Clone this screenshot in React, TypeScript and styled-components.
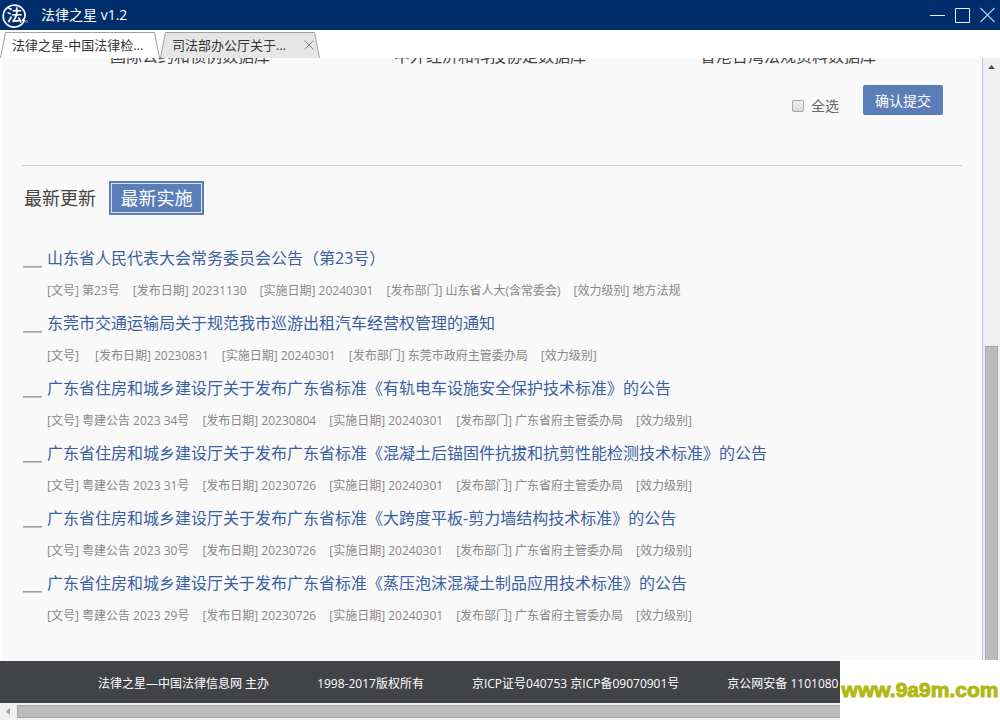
import React from 'react';
import styled, { createGlobalStyle } from 'styled-components';

const GlobalStyle = createGlobalStyle`
  * { box-sizing: border-box; }
  body {
    margin: 0;
    background: #fff;
    font-family: "Open Sans", "Noto Sans CJK SC", sans-serif;
    color: #444;
  }
  button { font: inherit; padding: 0; border: 0; background: none; cursor: pointer; }
`;

const Window = styled.div`
  position: relative;
  display: flex;
  flex-direction: column;
  min-height: 100vh;
  overflow: hidden;
`;

const TitleBar = styled.header`
  display: flex;
  align-items: center;
  height: 30px;
  padding: 0 4px 0 2px;
  background: #002e6c;
  color: #fff;
`;

const AppTitle = styled.h1`
  flex: 1;
  margin: 0 0 0 13px;
  font-size: 14px;
  font-weight: 400;
  line-height: 32px;
`;

const WindowButtons = styled.div`
  display: flex;
  gap: 9px;
`;

const WindowButton = styled.button`
  width: 16px;
  height: 16px;
  svg { display: block; }
`;

const TabBar = styled.nav`
  display: flex;
  height: 28px;
  padding-top: 2px;
`;

const Tab = styled.div`
  position: relative;
  display: flex;
  align-items: center;
  width: 160px;
  height: 26px;
  padding: 0 6px 0 12px;
`;

const TabShape = styled.svg`
  position: absolute;
  inset: 0;
`;

const TabLabel = styled.button`
  position: relative;
  flex: 1;
  text-align: left;
  white-space: nowrap;
  font-size: 13px;
  line-height: 24px;
  color: #333;
`;

const TabClose = styled.button`
  position: relative;
  width: 10px;
  height: 10px;
  svg { display: block; }
`;

const Body = styled.div`
  display: flex;
  flex: 1;
`;

const Page = styled.main`
  flex: 1;
  min-width: 0;
  margin-left: 2px;
  padding: 0 20px 26px;
  background: #f9f9f9;
  border-right: 1px solid #b4c3e0;
`;

const DatabaseRow = styled.div`
  display: flex;
  align-items: flex-end;
  height: 10px;
  padding-left: 88px;
  overflow: hidden;
  font-size: 16px;
  line-height: 24px;
  white-space: nowrap;
`;

const Database = styled.span<{ $gap: number }>`
  margin-right: ${(p) => p.$gap}px;
`;

const SubmitRow = styled.form`
  display: flex;
  justify-content: flex-end;
  align-items: center;
  margin-top: 16px;
  padding: 0 19px 49px 0;
  border-bottom: 1px solid #d0d0d0;
`;

const SelectAll = styled.label`
  display: flex;
  align-items: center;
  gap: 7px;
  margin: 12px 24px 0 0;
  font-size: 14px;
  line-height: 20px;
  color: #666;
`;

const Checkbox = styled.input`
  appearance: none;
  width: 12px;
  height: 12px;
  margin: 0;
  border: 1px solid #a6a6a6;
  border-radius: 2px;
  background: linear-gradient(#f0f0f0, #dcdcdc);
`;

const Submit = styled.button`
  width: 80px;
  height: 30px;
  border-radius: 2px;
  background: #5b7db8;
  color: #fff;
  font-size: 14px;
`;

const Sections = styled.div`
  display: flex;
  align-items: center;
  gap: 13px;
  margin: 15px 0 0 2px;
`;

const SectionButton = styled.button<{ $active?: boolean }>`
  height: 34px;
  font-size: 18px;
  line-height: 28px;
  color: ${(p) => (p.$active ? '#fff' : '#444')};
  ${(p) =>
    p.$active &&
    `
    padding: 0 8px;
    background: #5b7db8;
    border: 2px solid #5b7db8;
    box-shadow: inset 0 0 0 1px #d5e2f5;
    width: 95px;
  `}
`;

const List = styled.ul`
  margin: 28px 0 0;
  padding: 0;
  list-style: none;
`;

const Item = styled.li`
  display: flex;
  gap: 5px;
  height: 65px;
  padding-left: 1px;
  white-space: nowrap;
`;

const Dash = styled.span`
  width: 19px;
  height: 2px;
  margin-top: 23px;
  background: #a0a0a0;
  border-bottom: 1px solid #c4c4c4;
`;

const ItemTitle = styled.a`
  display: block;
  font-size: 16px;
  line-height: 30px;
  color: #3a5fa3;
  text-decoration: none;
`;

const Meta = styled.div`
  display: flex;
  gap: 13px;
  padding-top: 8px;
  font-size: 12px;
  line-height: 20px;
  color: #888;
  white-space: pre;
`;

const VerticalBar = styled.div`
  display: flex;
  flex-direction: column;
  align-items: center;
  width: 17px;
  padding: 7px 2px 0;
  background: #f0f0f0;
`;

const VerticalThumb = styled.div`
  align-self: stretch;
  flex: 1;
  margin: 277px 0 0;
  background: #bcbcbc;
  border: 1px solid #a8a8a8;
`;

const Footer = styled.footer`
  display: flex;
  gap: 48px;
  height: 42px;
  padding-left: 98px;
  background: #424346;
  color: #fff;
  font-size: 12px;
  line-height: 46px;
  white-space: nowrap;
`;

const HorizontalBar = styled.div`
  display: flex;
  align-items: center;
  height: 17px;
  padding: 2px 0 2px 6px;
  background: #f0f0f0;
`;

const HorizontalThumb = styled.div`
  align-self: stretch;
  flex: 1;
  margin-left: 7px;
  background: #bcbcbc;
  border: 1px solid #a8a8a8;
`;

const Watermark = styled.div`
  position: absolute;
  right: 0;
  bottom: 0;
  width: 160px;
  height: 60px;
  background: #fff;
  color: #b2b812;
  font-family: "Liberation Sans", sans-serif;
  font-size: 21px;
  font-weight: 700;
  line-height: 60px;
  text-align: center;
  -webkit-text-stroke: 1px #b2b812;
`;

const databases = [
  { name: '国际公约和惯例数据库', gap: 124 },
  { name: '中外经济和科技协定数据库', gap: 114 },
  { name: '香港台湾法规资料数据库', gap: 0 },
];

const labels = ['文号', '发布日期', '实施日期', '发布部门', '效力级别'];

const items = [
  {
    title: '山东省人民代表大会常务委员会公告（第23号）',
    meta: ['第23号', '20231130', '20240301', '山东省人大(含常委会)', '地方法规'],
  },
  {
    title: '东莞市交通运输局关于规范我市巡游出租汽车经营权管理的通知',
    meta: ['', '20230831', '20240301', '东莞市政府主管委办局', ''],
  },
  {
    title: '广东省住房和城乡建设厅关于发布广东省标准《有轨电车设施安全保护技术标准》的公告',
    meta: ['粤建公告 2023 34号', '20230804', '20240301', '广东省府主管委办局', ''],
  },
  {
    title: '广东省住房和城乡建设厅关于发布广东省标准《混凝土后锚固件抗拔和抗剪性能检测技术标准》的公告',
    meta: ['粤建公告 2023 31号', '20230726', '20240301', '广东省府主管委办局', ''],
  },
  {
    title: '广东省住房和城乡建设厅关于发布广东省标准《大跨度平板-剪力墙结构技术标准》的公告',
    meta: ['粤建公告 2023 30号', '20230726', '20240301', '广东省府主管委办局', ''],
  },
  {
    title: '广东省住房和城乡建设厅关于发布广东省标准《蒸压泡沫混凝土制品应用技术标准》的公告',
    meta: ['粤建公告 2023 29号', '20230726', '20240301', '广东省府主管委办局', ''],
  },
];

const LogoText = styled.text`
  font-family: "Noto Sans CJK SC", sans-serif;
  font-size: 16px;
  font-weight: 500;
`;

const Logo = () => (
  <svg width="26" height="26" viewBox="0 0 26 26" aria-hidden="true">
    <path d="M22.500 18A11 11 0 1 1 23 12C23.200 15 22.500 17.500 20 18.500" fill="none" stroke="#fff" strokeWidth="1.700" />
    <LogoText x="12.500" y="19" textAnchor="middle" fill="#fff">法</LogoText>
    <circle cx="24.500" cy="19.500" r="1" fill="none" stroke="#8fa6c8" />
  </svg>
);

const TabBackground = ({ fill }: { fill: string }) => (
  <TabShape width="160" height="26" viewBox="0 0 160 26" aria-hidden="true">
    <path d="M0.500 26L5.500 0.500H154.500L159.500 26" fill={fill} stroke="#a0a0a0" />
  </TabShape>
);

export default function App() {
  return (
    <Window>
      <GlobalStyle />
      <TitleBar>
        <Logo />
        <AppTitle>法律之星 v1.2</AppTitle>
        <WindowButtons>
          <WindowButton aria-label="最小化">
            <svg width="16" height="16" stroke="#e8f0fa"><path d="M0 8.500H15" /></svg>
          </WindowButton>
          <WindowButton aria-label="最大化">
            <svg width="16" height="16" fill="none" stroke="#e8f0fa"><path d="M0.500 1.500H14.500V15.500H0.500Z" /></svg>
          </WindowButton>
          <WindowButton aria-label="关闭">
            <svg width="16" height="16" stroke="#b4c6e0" strokeWidth="1.200"><path d="M0.500 1L14.500 15M14.500 1L0.500 15" /></svg>
          </WindowButton>
        </WindowButtons>
      </TitleBar>

      <TabBar>
        <Tab>
          <TabBackground fill="#fff" />
          <TabLabel>法律之星-中国法律检...</TabLabel>
        </Tab>
        <Tab>
          <TabBackground fill="#e6e6e6" />
          <TabLabel>司法部办公厅关于...</TabLabel>
          <TabClose aria-label="关闭标签">
            <svg width="10" height="10" stroke="#808080"><path d="M0.500 0.500L9.500 9.500M9.500 0.500L0.500 9.500" /></svg>
          </TabClose>
        </Tab>
      </TabBar>

      <Body>
        <Page>
          <DatabaseRow>
            {databases.map((d) => (
              <Database key={d.name} $gap={d.gap}>{d.name}</Database>
            ))}
          </DatabaseRow>
          <SubmitRow onSubmit={(e) => e.preventDefault()}>
            <SelectAll>
              <Checkbox type="checkbox" />
              全选
            </SelectAll>
            <Submit type="submit">确认提交</Submit>
          </SubmitRow>

          <Sections>
            <SectionButton>最新更新</SectionButton>
            <SectionButton $active>最新实施</SectionButton>
          </Sections>

          <List>
            {items.map((item) => (
              <Item key={item.title}>
                <Dash />
                <div>
                  <ItemTitle href="#">{item.title}</ItemTitle>
                  <Meta>
                    {labels.map((label, i) => (
                      <span key={label}>{`[${label}] ${item.meta[i]}`}</span>
                    ))}
                  </Meta>
                </div>
              </Item>
            ))}
          </List>
        </Page>
        <VerticalBar>
          <svg width="7" height="4" fill="#505050"><path d="M0 4L3.500 0L7 4Z" /></svg>
          <VerticalThumb />
        </VerticalBar>
      </Body>

      <Footer>
        <span>法律之星—中国法律信息网 主办</span>
        <span>1998-2017版权所有</span>
        <span>京ICP证号040753 京ICP备09070901号</span>
        <span>京公网安备 1101080</span>
      </Footer>
      <HorizontalBar>
        <svg width="4" height="7" fill="#a0a0a0"><path d="M4 0L0 3.500L4 7Z" /></svg>
        <HorizontalThumb />
      </HorizontalBar>
      <Watermark>www.9a9m.com</Watermark>
    </Window>
  );
}
